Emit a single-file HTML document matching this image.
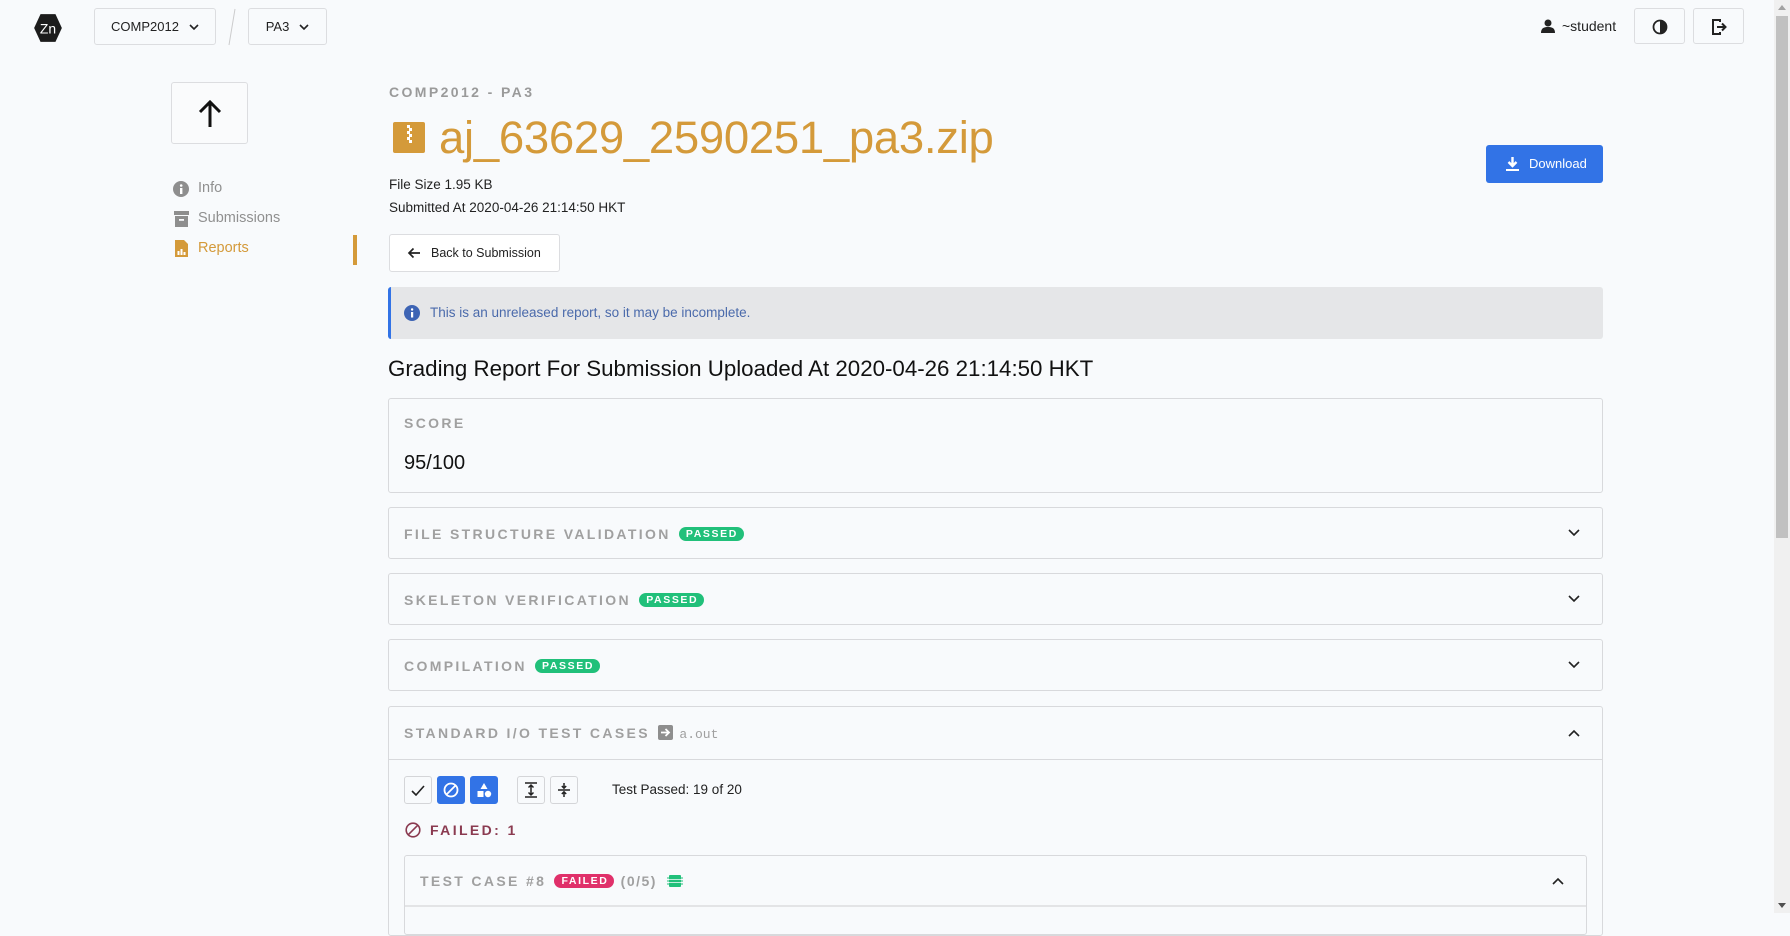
<!DOCTYPE html>
<html><head><meta charset="utf-8"><style>
*{box-sizing:border-box;margin:0;padding:0}
body{width:1790px;height:913px;overflow:hidden;background:#f8fafc;font-family:"Liberation Sans",Arial,sans-serif;color:#222;position:relative}
.a{position:absolute}
.btn{position:absolute;border:1px solid #dcdde0;border-radius:3px;background:#f8fafc}
.card{position:absolute;left:388px;width:1215px;border:1px solid #d8d9dc;border-radius:3px;background:#f8fafc}
.lbl{font-size:14px;font-weight:bold;letter-spacing:2.35px;color:#a0a0a0;white-space:nowrap}
.badge{display:inline-block;font-size:10.5px;font-weight:bold;letter-spacing:1.6px;color:#fff;background:#21c07a;border-radius:7px;padding:1px 6px 1px 7px;vertical-align:2px;margin-left:2px}
.chev{position:absolute;right:22px;top:50%;margin-top:-4px}
.tb{position:absolute;top:776px;width:28px;height:28px;border:1px solid #d4d5d8;border-radius:3px;background:#f8fafc;display:flex;align-items:center;justify-content:center}
.tb.on{background:#3273e6;border-color:#3273e6}
.dd{display:flex;align-items:center;justify-content:center;gap:10px;font-size:13px}
</style></head><body>
<!-- top bar -->
<svg class="a" style="left:32px;top:12px" width="32" height="32" viewBox="0 0 28 30"><polygon points="7,2 21,2 27,15 21,28 7,28 1,15" fill="#1c1c1c"/><text x="14" y="20" fill="#fff" font-size="13" font-family="Liberation Sans" text-anchor="middle">Zn</text></svg>
<div class="btn dd" style="left:94px;top:8px;width:122px;height:37px">COMP2012 <svg width="10" height="8"><path d="M1 2l4 4 4-4" stroke="#222" stroke-width="1.6" fill="none"/></svg></div>
<svg class="a" style="left:225px;top:8px" width="14" height="38"><path d="M10 1L4 37" stroke="#ccc"/></svg>
<div class="btn dd" style="left:248px;top:8px;width:79px;height:37px">PA3 <svg width="10" height="8"><path d="M1 2l4 4 4-4" stroke="#222" stroke-width="1.6" fill="none"/></svg></div>
<svg class="a" style="left:1541px;top:19px" width="14" height="14"><circle cx="7" cy="4" r="3.5" fill="#222"/><path d="M0 14c0-5 3-6 7-6s7 1 7 6z" fill="#222"/></svg>
<div class="a" style="left:1562px;top:18px;font-size:14px">~student</div>
<div class="btn" style="left:1634px;top:8px;width:51px;height:36px"><svg class="a" style="left:17px;top:10px" width="16" height="16"><circle cx="8" cy="8" r="6.5" stroke="#222" stroke-width="1.8" fill="none"/><path d="M8 2a6 6 0 0 1 0 12z" fill="#222"/></svg></div>
<div class="btn" style="left:1693px;top:8px;width:51px;height:36px"><svg class="a" style="left:17px;top:9px" width="18" height="18"><path d="M9 4V2H2v14h7v-2" stroke="#222" stroke-width="2" fill="none"/><path d="M6 9h8M11 5.5L14.5 9 11 12.5" stroke="#222" stroke-width="2" fill="none"/></svg></div>
<!-- scrollbar -->
<div class="a" style="left:1774px;top:0;width:16px;height:913px;background:#f0f0f0"></div>
<div class="a" style="left:1776px;top:16px;width:12px;height:522px;background:#c1c1c1"></div>
<svg class="a" style="left:1778px;top:5px" width="8" height="5"><path d="M0 5L4 0 8 5z" fill="#a3a3a3"/></svg>
<svg class="a" style="left:1778px;top:903px" width="8" height="5"><path d="M0 0L4 5 8 0z" fill="#505050"/></svg>
<!-- sidebar -->
<div class="btn" style="left:171px;top:82px;width:77px;height:62px;background:#fafbfc"><svg class="a" style="left:25px;top:16px" width="26" height="30"><path d="M13 28V3M3 13L13 3 23 13" stroke="#111" stroke-width="3" fill="none"/></svg></div>
<svg class="a" style="left:173px;top:181px" width="16" height="16"><circle cx="8" cy="8" r="8" fill="#8e8e8e"/><rect x="7" y="7" width="2.4" height="6" fill="#fff"/><circle cx="8.2" cy="4.5" r="1.3" fill="#fff"/></svg>
<div class="a" style="left:198px;top:180px;font-size:14.5px;color:#909090">Info</div>
<svg class="a" style="left:174px;top:211px" width="15" height="16"><rect x="0" y="0" width="15" height="4" fill="#8e8e8e"/><rect x="1" y="5" width="13" height="11" fill="#8e8e8e"/><rect x="5" y="8" width="5" height="1.8" fill="#f8fafc"/></svg>
<div class="a" style="left:198px;top:210px;font-size:14.5px;color:#909090">Submissions</div>
<svg class="a" style="left:175px;top:240px" width="13" height="17"><path d="M0 0h9l4 4v13H0z" fill="#d49a3a"/><rect x="2.5" y="11" width="2" height="4" fill="#fff"/><rect x="5.5" y="9" width="2" height="6" fill="#fff"/><rect x="8.5" y="12" width="2" height="3" fill="#fff"/></svg>
<div class="a" style="left:198px;top:240px;font-size:14.5px;color:#d49a3a">Reports</div>
<div class="a" style="left:353px;top:235px;width:4px;height:30px;background:#d49a3a"></div>
<!-- header -->
<div class="a" style="left:389px;top:84px;font-size:14px;font-weight:bold;letter-spacing:2.4px;color:#9a9a9a">COMP2012 - PA3</div>
<svg class="a" style="left:393px;top:122px" width="32" height="31"><rect width="32" height="31" rx="2" fill="#d49a3a"/><path d="M14 3h3v3h-3zM16 6h3v3h-3zM14 9h3v3h-3zM16 12h3v3h-3zM14 15h3v3h-3zM16 18h3v3h-3z" fill="#fff"/></svg>
<div class="a" style="left:439px;top:112px;font-size:45.5px;color:#d49a3a;letter-spacing:-0.3px">aj_63629_2590251_pa3.zip</div>
<div class="a" style="left:389px;top:177px;font-size:13.5px">File Size 1.95 KB</div>
<div class="a" style="left:389px;top:200px;font-size:13.5px">Submitted At 2020-04-26 21:14:50 HKT</div>
<div class="a" style="left:1486px;top:145px;width:117px;height:38px;background:#3273e6;border-radius:3px;color:#fff;font-size:13px;line-height:38px"><svg class="a" style="left:20px;top:12px" width="13" height="14"><path d="M6.5 0v8M2.5 5l4 4 4-4" stroke="#fff" stroke-width="2.4" fill="none"/><rect x="0" y="12" width="13" height="2" fill="#fff"/></svg><span style="position:absolute;left:43px">Download</span></div>
<div class="btn" style="left:389px;top:234px;width:171px;height:38px;background:#fff;font-size:12.5px;line-height:36px;padding-left:41px;white-space:nowrap"><svg class="a" style="left:17px;top:12px" width="14" height="12"><path d="M13 6H2M6.5 1.5L2 6l4.5 4.5" stroke="#222" stroke-width="1.7" fill="none"/></svg>Back to Submission</div>
<!-- alert -->
<div class="a" style="left:388px;top:287px;width:1215px;height:52px;background:#e5e6e8;border-left:3px solid #3273e6;border-radius:3px"></div>
<svg class="a" style="left:404px;top:305px" width="16" height="16"><circle cx="8" cy="8" r="8" fill="#3d64b4"/><rect x="7" y="7" width="2.2" height="5.5" fill="#fff"/><circle cx="8.1" cy="4.5" r="1.2" fill="#fff"/></svg>
<div class="a" style="left:430px;top:305px;font-size:13.5px;color:#4a6aab">This is an unreleased report, so it may be incomplete.</div>
<div class="a" style="left:388px;top:356px;font-size:22.3px;color:#111">Grading Report For Submission Uploaded At 2020-04-26 21:14:50 HKT</div>
<!-- score -->
<div class="card" style="top:398px;height:95px"><div class="lbl a" style="left:15px;top:16px">SCORE</div><div class="a" style="left:15px;top:53px;font-size:20px;color:#111">95/100</div></div>
<div class="card" style="top:507px;height:52px"><div class="lbl a" style="left:15px;top:18px">FILE STRUCTURE VALIDATION <span class="badge">PASSED</span></div><svg class="chev" width="12" height="8"><path d="M1 1l5 5 5-5" stroke="#222" stroke-width="1.6" fill="none"/></svg></div>
<div class="card" style="top:573px;height:52px"><div class="lbl a" style="left:15px;top:18px">SKELETON VERIFICATION <span class="badge">PASSED</span></div><svg class="chev" width="12" height="8"><path d="M1 1l5 5 5-5" stroke="#222" stroke-width="1.6" fill="none"/></svg></div>
<div class="card" style="top:639px;height:52px"><div class="lbl a" style="left:15px;top:18px">COMPILATION <span class="badge">PASSED</span></div><svg class="chev" width="12" height="8"><path d="M1 1l5 5 5-5" stroke="#222" stroke-width="1.6" fill="none"/></svg></div>
<div class="card" style="top:706px;height:230px">
 <div class="a" style="left:0;top:0;width:1213px;height:53px;border-bottom:1px solid #d8d9dc">
 <div class="lbl a" style="left:15px;top:18px">STANDARD I/O TEST CASES <svg width="15" height="15" style="vertical-align:-2px;margin-left:2px"><rect width="15" height="15" rx="2" fill="#8e8e8e"/><path d="M3 7.5h8M7.5 4l3.5 3.5L7.5 11" stroke="#fff" stroke-width="1.8" fill="none"/></svg> <span style="font-family:'Liberation Mono',monospace;font-weight:normal;letter-spacing:0;font-size:13px">a.out</span></div>
 <svg class="chev" width="12" height="8"><path d="M1 7l5-5 5 5" stroke="#222" stroke-width="1.6" fill="none"/></svg></div>
</div>
<div class="tb" style="left:404px"><svg width="14" height="11"><path d="M1 6l4 4 8-9" stroke="#222" stroke-width="1.6" fill="none"/></svg></div>
<div class="tb on" style="left:437px"><svg width="16" height="16"><circle cx="8" cy="8" r="6.5" stroke="#fff" stroke-width="1.8" fill="none"/><path d="M3.5 12.5l9-9" stroke="#fff" stroke-width="1.8"/></svg></div>
<div class="tb on" style="left:470px"><svg width="16" height="16"><path d="M8 1l3.5 6h-7z" fill="#fff"/><rect x="1.5" y="9" width="6" height="6" fill="#fff"/><circle cx="12" cy="12" r="3.2" fill="#fff"/></svg></div>
<div class="tb" style="left:517px"><svg width="14" height="16"><path d="M1 1h12M1 15h12M7 3v10M4.5 5.5L7 3l2.5 2.5M4.5 10.5L7 13l2.5-2.5" stroke="#222" stroke-width="1.5" fill="none"/></svg></div>
<div class="tb" style="left:550px"><svg width="14" height="16"><path d="M1 8h12M7 1v5M7 10v5M4.8 4L7 6.2 9.2 4M4.8 12L7 9.8 9.2 12" stroke="#222" stroke-width="1.5" fill="none"/></svg></div>
<div class="a" style="left:612px;top:782px;font-size:13.5px">Test Passed: 19 of 20</div>
<svg class="a" style="left:405px;top:822px" width="16" height="16"><circle cx="8" cy="8" r="6.8" stroke="#8a3a50" stroke-width="1.6" fill="none"/><path d="M3.3 12.7l9.4-9.4" stroke="#8a3a50" stroke-width="1.6"/></svg>
<div class="a" style="left:430px;top:822px;font-size:14px;font-weight:bold;letter-spacing:2.4px;color:#8a3a50">FAILED: 1</div>
<div class="a" style="left:404px;top:855px;width:1183px;height:80px;border:1px solid #d8d9dc;border-radius:3px">
 <div class="a" style="left:0;top:0;width:1181px;height:51px;border-bottom:2px solid #e3e4e6">
 <div class="lbl a" style="left:15px;top:17px">TEST CASE #8 <span class="badge" style="background:#e0306a">FAILED</span> <span style="letter-spacing:1.5px">(0/5)</span> <svg width="16" height="14" style="vertical-align:-2px;margin-left:4px"><rect x="2" y="1" width="12" height="12" rx="1" fill="#21c07a"/><path d="M0 4h16M0 7h16M0 10h16" stroke="#21c07a" stroke-width="1"/><path d="M2 5.5h12M2 8.5h12" stroke="#f8fafc" stroke-width="0.8"/></svg></div>
 <svg class="chev" width="12" height="8"><path d="M1 7l5-5 5 5" stroke="#222" stroke-width="1.6" fill="none"/></svg></div>
</div>
</body></html>
